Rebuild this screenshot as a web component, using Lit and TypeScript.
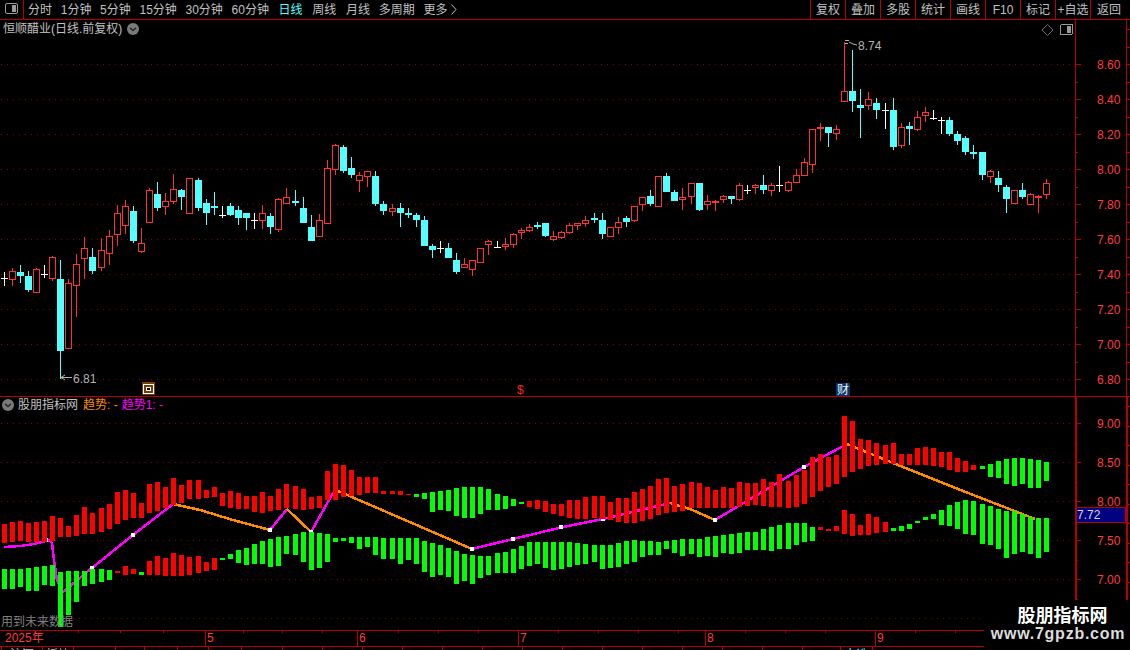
import { LitElement, html, css, svg } from "lit";
import { customElement } from "lit/decorators.js";

type Candle = [string, number, number, number, number];

const CANDLES: Candle[] = [
  ["w",272,278,278,286],["r",268,271,280,286],["c",265,272,276,283],["c",271,276,290,292],["r",268,269,293,293],
  ["w",265,274,274,278],["r",256,257,279,281],["c",260,279,351,379],["r",279,283,349,349],["r",254,264,286,317],
  ["r",237,248,259,279],["c",248,257,271,274],["r",238,250,268,271],["r",230,236,254,265],["r",205,213,235,246],
  ["r",200,206,226,234],["c",206,211,241,243],["r",228,243,252,253],["r",188,190,223,223],["c",182,194,208,211],
  ["r",193,201,207,215],["r",174,189,202,204],["c",189,190,197,210],["r",178,178,214,214],["c",178,180,208,211],
  ["c",199,203,213,225],["c",192,206,208,215],["w",206,215,215,218],["c",203,206,215,216],["c",206,210,218,225],
  ["c",213,213,218,230],["w",213,220,220,229],["r",205,213,221,229],["c",213,216,227,234],["r",198,199,230,232],
  ["r",188,197,204,204],["c",190,201,203,206],["c",197,208,223,223],["c",215,227,241,241],["r",214,220,237,237],
  ["r",160,168,224,224],["r",144,145,170,175],["c",145,147,171,173],["c",157,168,175,178],["r",172,175,181,192],
  ["r",171,171,177,187],["c",171,176,204,206],["c",201,204,211,215],["r",204,208,212,216],["c",203,208,213,227],
  ["c",208,213,215,218],["c",213,215,220,227],["c",216,220,246,246],["c",244,246,250,258],["w",241,248,248,253],
  ["c",243,248,258,258],["c",253,260,272,274],["r",258,264,268,268],["r",260,260,270,276],["r",248,248,263,263],
  ["r",240,241,245,255],["w",241,247,247,248],["r",238,244,247,250],["r",233,234,245,248],["r",228,230,233,239],
  ["r",224,227,231,232],["c",222,225,227,229],["c",223,223,236,237],["r",231,236,240,241],["r",231,232,238,239],
  ["r",223,225,233,234],["r",223,223,226,230],["r",216,220,224,227],["c",213,218,220,223],["c",213,220,234,239],
  ["r",227,227,237,237],["r",217,222,228,234],["c",216,218,222,227],["r",206,206,221,222],["r",197,197,205,211],
  ["c",190,196,204,206],["r",176,176,207,207],["c",173,176,192,192],["c",190,192,201,201],["r",188,197,200,210],
  ["r",183,183,197,204],["c",183,183,210,211],["r",195,201,205,210],["r",200,201,203,211],["r",195,196,200,203],
  ["c",196,196,199,204],["r",183,185,200,201],["w",185,190,190,194],["r",184,185,188,194],["c",175,185,190,194],
  ["r",183,185,191,196],["w",166,185,185,192],["r",181,182,191,192],["r",169,175,183,183],["r",158,162,176,176],
  ["r",129,129,165,173],["r",123,127,129,141],["c",127,127,133,147],["r",125,129,134,140],["r",42,91,102,102],
  ["c",50,91,101,112],["c",89,105,108,138],["r",92,99,106,110],["c",98,103,110,119],["w",103,110,110,129],
  ["c",98,110,147,150],["r",123,127,146,148],["c",122,126,129,145],["r",111,117,130,131],["r",107,112,116,122],
  ["w",110,118,118,120],["w",117,120,120,134],["c",117,120,134,136],["c",131,134,141,145],["c",136,138,152,155],
  ["c",145,152,154,159],["c",152,152,175,180],["r",170,171,177,183],["c",171,178,185,192],["c",185,187,199,213],
  ["r",190,190,204,204],["c",183,190,197,199],["r",193,194,205,205],["r",195,196,197,213],["r",179,183,195,199],
];

const UPPER: [number, number][] = [
  [524,543],[522,542],[521,541],[523,542],[522,542],[521,542],[516,541],[518,537],[526,537],[515,536],
  [507,534],[513,534],[508,532],[504,529],[492,524],[490,520],[493,518],[503,518],[484,513],[482,511],
  [487,508],[478,505],[485,503],[480,499],[480,499],[490,498],[487,497],[493,506],[491,508],[493,509],
  [496,509],[496,512],[492,513],[496,511],[489,510],[484,508],[486,509],[489,510],[497,509],[496,508],
  [471,500],[464,500],[465,497],[470,496],[477,495],[477,493],[477,493],[491,494],[491,494],[491,495],
  [494,495],[494,497],[493,499],[492,512],[491,510],[490,511],[488,516],[487,518],[487,518],[487,514],
  [489,510],[494,510],[496,509],[499,506],[502,504],[501,507],[500,509],[501,512],[504,514],[504,516],
  [500,518],[500,519],[497,519],[496,518],[496,519],[502,520],[498,522],[498,523],[492,523],[489,521],
  [486,519],[479,515],[478,513],[486,512],[484,511],[482,508],[483,508],[487,508],[490,508],[487,508],
  [488,508],[482,507],[483,506],[483,505],[479,506],[482,507],[474,507],[481,508],[475,507],[470,504],
  [457,497],[454,491],[457,487],[455,484],[416,477],[421,472],[439,469],[440,466],[443,465],[445,464],
  [443,464],[454,465],[454,465],[448,465],[447,465],[448,466],[452,467],[452,470],[458,472],[461,472],
  [465,470],[466,469],[464,477],[461,478],[459,484],[458,486],[458,484],[459,488],[460,488],[462,481],
];

const LOWER: [number, number][] = [
  [569,589],[569,589],[569,587],[568,591],[567,591],[566,585],[565,586],[572,627],[571,615],[571,602],
  [571,586],[569,584],[569,582],[570,580],[571,573],[566,575],[569,574],[572,575],[561,575],[556,575],
  [558,576],[553,576],[555,576],[557,575],[556,573],[562,571],[558,570],[558,560],[554,559],[550,563],
  [548,565],[544,564],[541,564],[539,567],[537,566],[536,554],[534,555],[532,562],[532,570],[533,568],
  [534,562],[538,542],[538,541],[537,543],[537,549],[537,547],[537,555],[538,559],[538,559],[538,564],
  [538,560],[538,564],[541,572],[543,577],[545,575],[548,577],[551,584],[554,581],[555,584],[556,578],
  [556,575],[553,573],[552,573],[549,573],[546,569],[542,566],[542,564],[542,568],[542,570],[542,569],
  [542,567],[543,565],[544,564],[545,562],[545,569],[545,568],[543,567],[541,564],[540,562],[541,557],
  [541,555],[542,555],[541,549],[540,553],[539,556],[539,554],[539,557],[537,556],[536,557],[535,553],
  [534,554],[533,553],[532,550],[532,550],[529,550],[527,551],[525,549],[523,549],[523,545],[523,542],
  [527,541],[527,530],[529,531],[526,531],[510,534],[514,536],[525,535],[514,535],[517,533],[522,532],
  [528,531],[526,531],[524,529],[521,523],[517,520],[514,519],[510,525],[505,526],[502,529],[500,534],
  [501,535],[504,544],[506,545],[509,549],[511,558],[511,554],[514,552],[517,554],[518,558],[518,552],
];

const JUMPS = [12, 24, 36, 48, 61, 73, 85, 97, 109, 121];
const wickX = (i: number) => 4 + 8 * i + JUMPS.filter((j) => j <= i).length;
const rect = (x: number, y: number, w: number, h: number) => `M${x} ${y}h${w}v${h}h${-w}z`;

const upperGreen = (i: number) => (i >= 51 && i <= 64) || i >= 121;
const lowerGreen = (i: number) => i <= 13 || i === 17 || (i >= 27 && i <= 100) || i >= 110;

function candlePaths() {
  let wickRed = "", bodyRed = "", cyan = "", white = "";
  CANDLES.forEach(([t, hi, top, bot, lo], i) => {
    const x = wickX(i);
    if (t === "r") {
      wickRed += rect(x, hi, 1, lo - hi);
      bodyRed += `M${x - 2.5} ${top + 0.5}h6v${Math.max(bot - top - 1, 1)}h-6z`;
    } else if (t === "c") {
      cyan += rect(x, hi, 1, lo - hi) + rect(x - 3, top, 7, bot - top);
    } else {
      white += rect(x, hi, 1, lo - hi) + rect(x - 3, top, 7, 1);
    }
  });
  return { wickRed, bodyRed, cyan, white };
}

function barPaths() {
  let red = "", green = "";
  UPPER.forEach(([a, b], i) => {
    const r = rect(wickX(i) - 2, a, 5, b - a);
    if (upperGreen(i)) green += r; else red += r;
  });
  LOWER.forEach(([a, b], i) => {
    const r = rect(wickX(i) - 2, a, 5, b - a);
    if (lowerGreen(i)) green += r; else red += r;
  });
  return { red, green };
}

const MAGENTA = [
  "4,547 20,546 34,544 50,540 52,543 54,560 57,580 63,592 92,568 133,535 173,504",
  "270,530 287,509",
  "311,532 333,493 338,491",
  "472,549 513,539 561,527.5 603,519 670,503",
  "715,520 804,467 847,444",
];
const ORANGE = [
  "173,504 200,510 233,520 270,530",
  "287,509 311,532",
  "338,491 472,549",
  "670,503 690,509 715,520",
  "847,444 893,463 963,491 1035,519",
];
const NODES = [[46, 540], [92, 568], [133, 535], [270, 530], [311, 532], [472, 549], [513, 539], [561, 527], [603, 519], [715, 520], [804, 467]];

const UP_LABELS: [number, string][] = [
  [64, "8.60"], [99, "8.40"], [134, "8.20"], [169, "8.00"], [204, "7.80"],
  [239, "7.60"], [274, "7.40"], [309, "7.20"], [344, "7.00"], [379, "6.80"],
];
const LOW_LABELS: [number, string][] = [[423, "9.00"], [462, "8.50"], [501, "8.00"], [540, "7.50"], [579, "7.00"]];

const TIME_TICKS = [78, 120, 163, 243, 282, 322, 398, 438, 478, 558, 598, 638, 678, 745, 785, 825, 915, 955];
const TIME_SEPS: [number, string][] = [[205, "5"], [357, "6"], [518, "7"], [705, "8"], [875, "9"]];

const NAV: [string, boolean][] = [
  ["分时", false], ["1分钟", true], ["5分钟", true], ["15分钟", true], ["30分钟", true], ["60分钟", true],
  ["日线", false], ["周线", false], ["月线", false], ["多周期", true], ["更多", true],
];
const ACTIONS = ["复权", "叠加", "多股", "统计", "画线", "F10", "标记", "+自选", "返回"];
const TABS: [string, number][] = [
  ["沪深", 41], ["板块", 31], ["", 42], ["", 29], ["", 33], ["", 31], ["", 33], ["", 41],
  ["", 40], ["", 40], ["", 40], ["", 40], ["", 40], ["", 40], ["", 40], ["", 40],
  ["", 40], ["", 40], ["", 40], ["", 40], ["", 40], ["", 38], ["自选", 32], ["", 112],
];

const panelIcon = () => html`<svg class="icon-panel" width="13" height="12" viewBox="0 0 13 12">
  <rect x="0.5" y="0.5" width="12" height="10" rx="1.5" fill="none" stroke="#9a9a9a"></rect>
  <rect x="7" y="2" width="4" height="7" fill="#9a9a9a"></rect>
</svg>`;

const chevron = () => html`<svg class="chev" width="12" height="12" viewBox="0 0 12 12">
  <circle cx="6" cy="6" r="6" fill="#7a7a7a"></circle>
  <path d="M3 4.8 L6 7.6 L9 4.8" fill="none" stroke="#222" stroke-width="1.3"></path>
</svg>`;

@customElement("app-root")
export class AppRoot extends LitElement {
  static styles = css`
    :host {
      display: block;
      width: 1130px;
      height: 650px;
      background: #000;
      overflow: hidden;
      position: relative;
      font-family: "Liberation Sans", "Noto Sans CJK SC", sans-serif;
      font-size: 12px;
      color: #c0c0c0;
    }
    .toolbar {
      display: flex;
      height: 20px;
      box-sizing: border-box;
      border-bottom: 1px solid #b80000;
      line-height: 21px;
      white-space: nowrap;
    }
    .side {
      width: 23px;
      box-sizing: content-box;
      border-right: 1px solid #b80000;
      display: flex;
      align-items: center;
      justify-content: center;
      padding-bottom: 1px;
    }
    .nav {
      display: flex;
      gap: 8.7px;
      padding-left: 3px;
      flex: 1;
    }
    .nav .cjk {
      margin-left: 1px;
    }
    .nav .on {
      color: #54ffff;
    }
    .arrow {
      margin-left: 4px;
      vertical-align: -1px;
    }
    .actions {
      display: flex;
    }
    .actions div {
      width: 34px;
      border-left: 1px solid #b80000;
      text-align: center;
    }
    .actions div:last-child {
      width: 36px;
      padding-right: 3px;
    }
    .pane {
      position: relative;
      display: block;
    }
    .canvas {
      display: block;
      shape-rendering: crispEdges;
    }
    .head {
      position: absolute;
      top: 2px;
      left: 3px;
      display: flex;
      align-items: center;
      gap: 5px;
      line-height: 14px;
      white-space: nowrap;
    }
    .head.low {
      top: 1px;
      left: 2px;
      gap: 4px;
    }
    .head .orange {
      color: #ff8c00;
      margin-left: 1px;
    }
    .head .magenta {
      color: #ff00ff;
    }
    .future {
      position: absolute;
      left: 1px;
      bottom: 1px;
      color: #808080;
      line-height: 14px;
    }
    .tabs {
      display: flex;
      height: 3px;
      overflow: hidden;
      padding-left: 1px;
      line-height: 14px;
    }
    .tabs div {
      box-sizing: border-box;
      border-left: 1px solid #b80000;
      text-align: center;
      padding-top: 1px;
      white-space: nowrap;
      overflow: hidden;
    }
    .tabs .on {
      color: #54ffff;
    }
    text {
      font-family: "Liberation Sans", "Noto Sans CJK SC", sans-serif;
      font-size: 12px;
    }
    .t-axis {
      fill: #ff3c3c;
    }
    .t-grey {
      fill: #b4b4b4;
    }
    .grid {
      stroke: #8a0000;
      stroke-width: 1;
      stroke-dasharray: 1 5;
      fill: none;
    }
    .rule {
      stroke: #b80000;
      stroke-width: 1;
      fill: none;
    }
    .rule2 {
      stroke: #b80000;
      stroke-width: 2;
      fill: none;
    }
    .trend {
      fill: none;
      stroke-width: 2.5;
    }
    .mark {
      position: absolute;
      right: 0;
      bottom: 0;
      width: 146px;
      height: 50px;
      background: #000;
      display: flex;
      flex-direction: column;
      align-items: center;
      line-height: 20px;
      padding-top: 4px;
      box-sizing: border-box;
      padding-left: 2px;
    }
    .mark .a {
      font-size: 18px;
      font-weight: 700;
      color: #fff;
      font-family: "Noto Sans CJK SC", sans-serif;
      margin-left: 9px;
    }
    .mark .b {
      font-size: 16px;
      font-weight: 700;
      color: #dcdcdc;
      letter-spacing: 0.75px;
      font-family: "Liberation Sans", sans-serif;
    }
  `;

  private grid(ys: number[]) {
    return svg`<path class="grid" d=${ys.map((y) => `M1 ${y + 0.5}H1075`).join("")}></path>`;
  }

  private axis(labels: [number, string][], half: number, y0: number, y1: number, heavy: boolean) {
    const ticks: string[] = [];
    labels.forEach(([y]) => {
      ticks.push(`M1075 ${y + 0.5}H1081`);
      const m = y + half;
      if (m < y1) ticks.push(`M1075 ${Math.round(m) + 0.5}H1078`);
    });
    const stubs: string[] = [];
    for (let y = y0 + 9; y < y1; y += half) stubs.push(`M1126 ${Math.round(y) + 0.5}H1130`);
    const spine = heavy ? `M1076 ${y0}V${y1}M1127 ${y0}V${y1}` : `M1075.5 ${y0}V${y1}M1126.5 ${y0}V${y1}`;
    return svg`
      <path class=${heavy ? "rule2" : "rule"} d=${spine}></path>
      <path class="rule" d=${ticks.join("") + stubs.join("")}></path>
      ${labels.map(([y, t]) => svg`<text class="t-axis" x="1097" y=${y + 5}>${t}</text>`)}
    `;
  }

  render() {
    const c = candlePaths();
    const b = barPaths();
    const upY = UP_LABELS.map(([y]) => y);
    const lowY = [...LOW_LABELS.map(([y]) => y), 618];
    return html`
      <div class="toolbar">
        <div class="side">${panelIcon()}</div>
        <div class="nav">
          ${NAV.map(([n, plain], i) => html`<span class="${plain ? "" : "cjk"} ${n === "日线" ? "on" : ""}">${n}${i === NAV.length - 1
            ? html`<svg class="arrow" width="6" height="11" viewBox="0 0 6 11"><path d="M0.5 0.5 L5 5.5 L0.5 10.5" fill="none" stroke="#c0c0c0"></path></svg>`
            : ""}</span>`)}
        </div>
        <div class="actions">${ACTIONS.map((a) => html`<div>${a}</div>`)}</div>
      </div>

      <div class="pane">
        <svg class="canvas" width="1130" height="377" viewBox="0 20 1130 377">
          ${this.grid(upY)}
          <path d=${c.wickRed} fill="#ff3232"></path>
          <path d=${c.bodyRed} fill="#000" stroke="#ff3232"></path>
          <path d=${c.cyan} fill="#54ffff"></path>
          <path d=${c.white} fill="#ffffff"></path>
          ${this.axis(UP_LABELS, 17.5, 20, 396, false)}
          <path d="M1047.5 24.5 L1053 30 L1047.5 35.5 L1042 30 Z" fill="none" stroke="#6e6e6e" shape-rendering="auto"></path>
          <rect x="1060.5" y="24.5" width="12" height="10" rx="1.5" fill="none" stroke="#9a9a9a"></rect>
          <rect x="1067" y="26" width="4" height="7" fill="#9a9a9a"></rect>
          <path d="M61 377.5H72M61 377.5L65 375M61 377.5L65 380" fill="none" stroke="#b4b4b4" shape-rendering="auto"></path>
          <text class="t-grey" x="73" y="383">6.81</text>
          <path d="M845 40.5H849M845 43.5H848M849 42L853 44L857 45" fill="none" stroke="#b4b4b4" shape-rendering="auto"></path>
          <text class="t-grey" x="858" y="50">8.74</text>
          <rect x="142" y="382" width="13" height="13" fill="#7a3c00"></rect>
          <rect x="143.5" y="384.5" width="10" height="9" fill="#7a3c00" stroke="#fff"></rect>
          <rect x="146.5" y="387.5" width="4" height="3" fill="#000" stroke="#fff"></rect>
          <text x="517" y="394" fill="#ff2020">$</text>
          <rect x="836" y="383" width="14" height="13" fill="#0a3468"></rect>
          <text x="837" y="394" fill="#e8f4ff">财</text>
          <path class="rule" d="M0 396.5H1130"></path>
        </svg>
        <div class="head">
          <span>恒顺醋业(日线.前复权)</span>${chevron()}
        </div>
      </div>

      <div class="pane">
        <svg class="canvas" width="1130" height="233" viewBox="0 397 1130 233">
          ${this.grid(lowY)}
          ${MAGENTA.map((p) => svg`<polyline class="trend" points=${p} stroke="#ff00ff"></polyline>`)}
          ${ORANGE.map((p) => svg`<polyline class="trend" points=${p} stroke="#ff8c00"></polyline>`)}
          ${NODES.map(([x, y]) => svg`<rect x=${x - 2} y=${y - 2} width="4" height="4" fill="#fff"></rect>`)}
          <path d=${b.red} fill="#ff0000"></path>
          <path d=${b.green} fill="#00ff00"></path>
          ${this.axis(LOW_LABELS, 19.5, 397, 630, true)}
          <rect x="1076.5" y="507.5" width="49" height="15" fill="#000080" stroke="#b80000"></rect>
          <text x="1077" y="519" fill="#d8d8d8">7.72</text>
        </svg>
        <div class="head low">
          ${chevron()}
          <span>股朋指标网</span>
          <span class="orange">趋势: -</span>
          <span class="magenta">趋势1: -</span>
        </div>
        <div class="future">用到未来数据</div>
      </div>

      <svg class="canvas" width="1130" height="17" viewBox="0 630 1130 17">
        <path class="rule" d="M0 630.5H1130M0 646.5H1130${TIME_TICKS.map((x) => `M${x}.5 630V633`).join("")}"></path>
        ${TIME_SEPS.map(([x, t]) => svg`
          <path class="rule" d="M${x}.5 630V646"></path>
          <text class="t-axis" x=${x + 2} y="642">${t}</text>`)}
        <text class="t-axis" x="5" y="642">2025年</text>
      </svg>
      <div class="tabs">
        ${TABS.map(([t, w]) => html`<div class=${t === "自选" ? "on" : ""} style="width:${w}px">${t}</div>`)}
      </div>

      <div class="mark">
        <span class="a">股朋指标网</span>
        <span class="b">www.7gpzb.com</span>
      </div>
    `;
  }
}
